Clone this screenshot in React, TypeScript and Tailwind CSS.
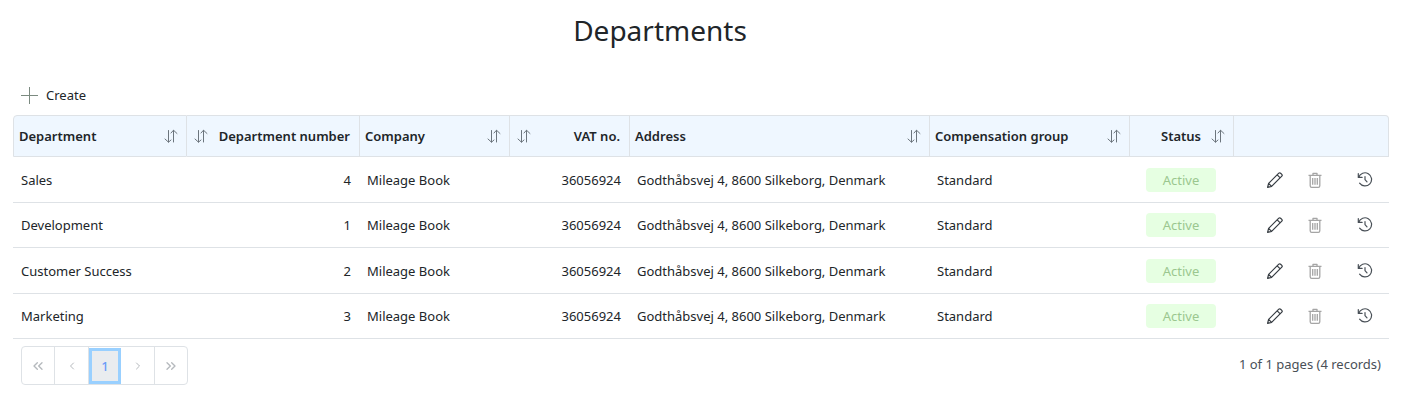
import React from 'react';
import clsx from 'clsx';
import { FiChevronLeft, FiChevronRight, FiChevronsLeft, FiChevronsRight } from 'react-icons/fi';

const departments = [
  { name: 'Sales', number: 4 },
  { name: 'Development', number: 1 },
  { name: 'Customer Success', number: 2 },
  { name: 'Marketing', number: 3 },
];

const columns = [
  { label: 'Department', width: 'w-[174px]', align: 'left' },
  { label: 'Department number', width: 'w-[173px]', align: 'right' },
  { label: 'Company', width: 'w-[150px]', align: 'left' },
  { label: 'VAT no.', width: 'w-[120px]', align: 'right' },
  { label: 'Address', width: 'w-auto', align: 'left' },
  { label: 'Compensation group', width: 'w-[200px]', align: 'left' },
  { label: 'Status', width: 'w-[104px]', align: 'center' },
];

const SortIcon = () => (
  <svg className="h-3.5 w-3.5" viewBox="0 0 14 14" fill="none" stroke="currentColor" strokeLinecap="round" strokeLinejoin="round">
    <path d="M4.5 1.5v11.5M1 10l3.5 3.2L7 11M9.5 13v-11.5M7 4L9.5 1.2L13 4.5" />
  </svg>
);

const PencilIcon = () => (
  <svg className="h-4 w-4" viewBox="0 0 16 16" fill="none" stroke="currentColor" strokeWidth="1.2" strokeLinejoin="round">
    <path d="M.6 15.4l1-4L11.8 1.2a1.3 1.3 0 0 1 1.8 0l1.2 1.2a1.3 1.3 0 0 1 0 1.8L4.6 14.4zM10.2 2.8l3 3M1.6 11.4l3 3" />
  </svg>
);

const TrashIcon = () => (
  <svg className="h-4 w-4" viewBox="0 0 16 16" fill="none" stroke="currentColor" strokeWidth="1.3" strokeLinejoin="round">
    <path d="M1.5 3.3h13M6 3V1.3h4v2M3.2 3.5v10.2c0 1 .5 1.6 1.5 1.6h6.6c1 0 1.5-.6 1.5-1.6V3.5M5.7 6v6.8M8 6v6.8M10.3 6v6.8" />
  </svg>
);

const HistoryIcon = () => (
  <svg className="h-4 w-4" viewBox="0 0 16 16" fill="none" stroke="currentColor" strokeWidth="1.2" strokeLinecap="round" strokeLinejoin="round">
    <path d="M1.3 1.6v3.8h3.8M1.7 5.3A6.6 6.6 0 1 1 2.6 11.2M8 4.5v3.1l2 2.2" />
  </svg>
);

const App = () => {
  return (
    <main className="pl-[13px] pr-[15px] font-['Noto_Sans','Open_Sans',sans-serif] text-sm leading-5 text-[#212529]">
      <h1 className="pt-3 pr-[82px] text-center text-[28px] leading-9">Departments</h1>

      <button className="mt-[35px] ml-2 flex items-center gap-2 text-[13px] leading-6">
        <svg className="h-[17px] w-[17px] text-[#7b8a80]" viewBox="0 0 17 17" fill="none" stroke="currentColor">
          <path d="M8.5 0v17M0 8.5h17" />
        </svg>
        Create
      </button>

      <table className="mt-2 w-full table-fixed border-separate border-spacing-0 text-[13px]">
        <thead>
          <tr className="h-[42px]">
            {columns.map((col) => (
              <th
                key={col.label}
                className={clsx(
                  'border-y border-r border-[#dee2e6] bg-[#eff7ff] font-semibold first:rounded-tl first:border-l',
                  col.width,
                  col.align === 'right' ? 'pr-[9px] pl-[7px]' : 'pr-2 pl-[5px]'
                )}
              >
                <div
                  className={clsx(
                    'flex items-center whitespace-nowrap',
                    col.align === 'right' && 'flex-row-reverse justify-between',
                    col.align === 'left' && 'justify-between',
                    col.align === 'center' && 'justify-end gap-2.5'
                  )}
                >
                  {col.label}
                  <button aria-label={`Sort by ${col.label}`} className="text-[#6c757d]">
                    <SortIcon />
                  </button>
                </div>
              </th>
            ))}
            <th className="w-[155px] rounded-tr border-y border-r border-[#dee2e6] bg-[#eff7ff]"></th>
          </tr>
        </thead>
        <tbody>
          {departments.map((item) => (
            <tr key={item.name} className="odd:h-[46px] even:h-[45px] [&>td]:border-b [&>td]:border-[#dee2e6] [&>td]:pr-[9px] [&>td]:pl-[7px] [&>td:first-child]:pl-2">
              <td>{item.name}</td>
              <td className="text-right">{item.number}</td>
              <td>Mileage Book</td>
              <td className="text-right">36056924</td>
              <td className="whitespace-nowrap">Godthåbsvej 4, 8600 Silkeborg, Denmark</td>
              <td>Standard</td>
              <td>
                <span className="mx-auto block w-[70px] rounded bg-[#e6ffe2] text-center leading-6 text-[#9bc78f]">Active</span>
              </td>
              <td>
                <div className="flex items-center justify-end pr-[7px]">
                  <button aria-label="Edit" className="mr-6 text-[#343a40]"><PencilIcon /></button>
                  <button aria-label="Delete" disabled className="mr-[34px] text-[#a5a5a5]"><TrashIcon /></button>
                  <button aria-label="History" className="text-[#495057]"><HistoryIcon /></button>
                </div>
              </td>
            </tr>
          ))}
        </tbody>
      </table>

      <div className="flex items-start justify-between px-2 pt-[7px] text-[#495057]">
        <nav aria-label="Pagination" className="flex h-[39px] rounded border border-[#dee2e6] text-[#b5b9bd]">
          <button aria-label="First page" disabled className="flex w-[33px] items-center justify-center border-r border-[#dee2e6]">
            <FiChevronsLeft className="h-4 w-4" />
          </button>
          <button aria-label="Previous page" disabled className="flex w-[34px] items-center justify-center border-r border-[#dee2e6]">
            <FiChevronLeft className="h-3 w-3" />
          </button>
          <button aria-current="page" className="mt-px w-8 border-3 border-[#99d0ff] bg-[#e9ecef] text-[13px] font-medium text-[#6a9cf8]">1</button>
          <button aria-label="Next page" disabled className="flex w-[34px] items-center justify-center border-r border-[#dee2e6]">
            <FiChevronRight className="h-3 w-3" />
          </button>
          <button aria-label="Last page" disabled className="flex w-8 items-center justify-center">
            <FiChevronsRight className="h-4 w-4" />
          </button>
        </nav>
        <p className="pt-2 text-[13px]">1 of 1 pages (4 records)</p>
      </div>
    </main>
  );
};

export default App;
